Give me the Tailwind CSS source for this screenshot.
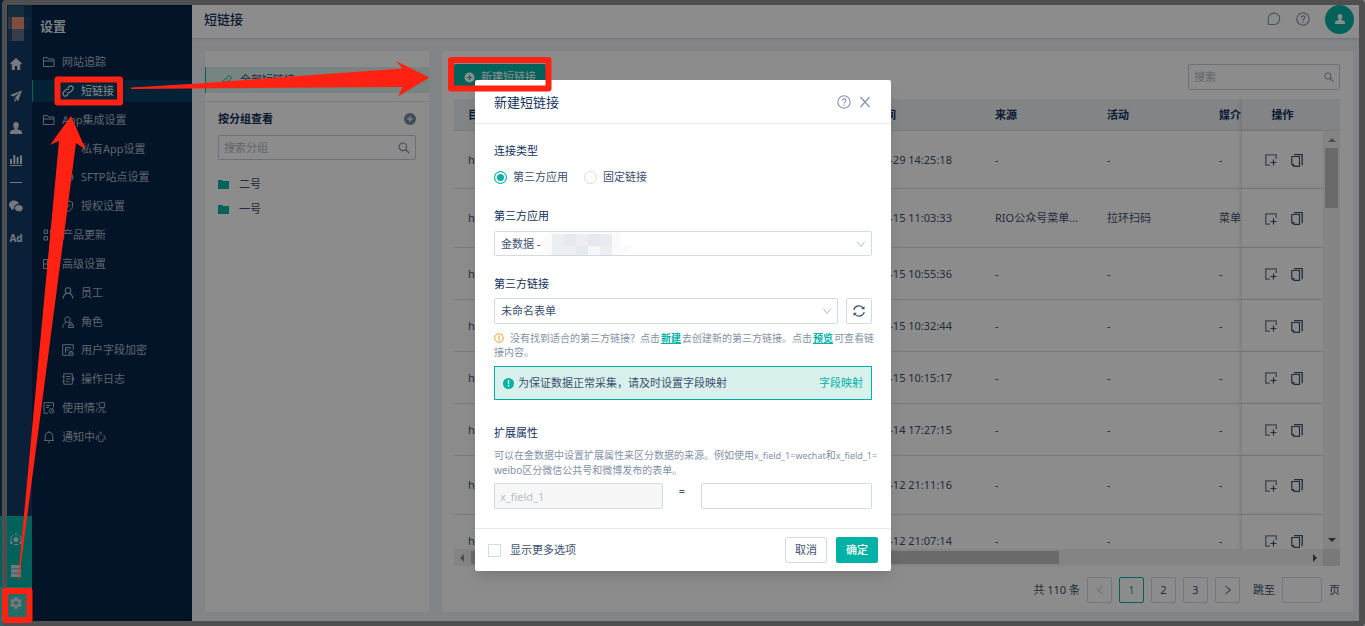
<!doctype html>
<html lang="zh-CN">
<head>
  <meta charset="UTF-8" />
  <meta name="viewport" content="width=device-width, initial-scale=1.0" />
  <title>短链接</title>
  <script src="https://cdn.jsdelivr.net/npm/@tailwindcss/browser@4"></script>
</head>
<body class="relative h-screen overflow-hidden bg-[#edf0f7] font-['Noto_Sans','Noto_Sans_CJK_SC',sans-serif] text-[11px] leading-4 text-[#3d506e]">
  <!-- icon set -->
  <svg class="hidden">
    <symbol id="i-folder" viewBox="0 0 12 12"><path d="M.5 10.5v-9h4l1 1.5h5.5v7.5zM.5 5h10.500" fill="none" stroke="currentColor"/></symbol>
    <symbol id="i-link" viewBox="0 0 12 12"><path d="M5 7.200a2.300 2.300 0 0 0 3.200 0l2.200-2.200a2.300 2.300 0 0 0-3.300-3.300L5.800 3M7 4.800a2.300 2.300 0 0 0-3.200 0L1.600 7a2.300 2.300 0 0 0 3.300 3.300L6.200 9" fill="none" stroke="currentColor" stroke-width="1.100"/></symbol>
    <symbol id="i-app" viewBox="0 0 12 12"><path d="M1.500 1.500h9v9h-9zM4 6h4" fill="none" stroke="currentColor"/></symbol>
    <symbol id="i-globe" viewBox="0 0 12 12"><path d="M6 1a5 5 0 1 1 0 10A5 5 0 0 1 6 1zM1 6h10" fill="none" stroke="currentColor"/></symbol>
    <symbol id="i-shield" viewBox="0 0 12 12"><path d="M6 .8l4.500 1.500v4C10.500 9 8 10.700 6 11.300 4 10.700 1.500 9 1.500 6.300v-4zM4 6l1.500 1.500L8.200 4.500" fill="none" stroke="currentColor"/></symbol>
    <symbol id="i-grid" viewBox="0 0 12 12"><path d="M1 1h3.500v3.500H1zM7.500 1H11v3.500H7.500zM1 7.500h3.500V11H1zM7.500 7.500H11V11H7.500z" fill="none" stroke="currentColor"/></symbol>
    <symbol id="i-set" viewBox="0 0 12 12"><path d="M.5 1.500h11v9H.5zM4.500 1.500v9M.5 6h11" fill="none" stroke="currentColor"/></symbol>
    <symbol id="i-user" viewBox="0 0 12 12"><path d="M6 .8a2.700 2.700 0 1 1 0 5.600A2.700 2.700 0 0 1 6 .8zM1 11.800c.2-3 1.500-4.500 3.500-5.600M11 11.800c-.2-3-1.500-4.500-3.500-5.600" fill="none" stroke="currentColor" stroke-width="1.100"/></symbol>
    <symbol id="i-role" viewBox="0 0 12 12"><path d="M5.500.8a2.700 2.700 0 1 1 0 5.600 2.700 2.700 0 0 1 0-5.600zM.8 11.800c.2-3 1.200-4.500 3.200-5.600M7 6.200l1 .8M6.500 9.200h5v2.300h-5zM7.700 9V8a1.300 1.300 0 0 1 2.600 0v1" fill="none" stroke="currentColor"/></symbol>
    <symbol id="i-enc" viewBox="0 0 12 12"><path d="M11.300 6V.7H.7v10.600H6M3.500 9V3.500h4.800v2M3.500 6H7M6.800 9.200h4.500v2.100H6.800zM7.800 9V7.500h2.500V9" fill="none" stroke="currentColor"/></symbol>
    <symbol id="i-log" viewBox="0 0 12 12"><path d="M1.800.8h8.500v10.400H1.800zM4 3.500h4.500M4 6h4.500M4 8.500h3M.3 3.500h2.200M.3 8.500h2.200M10.500 4.500h1v3h-1" fill="none" stroke="currentColor"/></symbol>
    <symbol id="i-usage" viewBox="0 0 12 12"><path d="M10.500 5.500V.7H1v10.600h4M3 3.500h4.500M3 5.500h3M8.500 6.500a2.300 2.300 0 1 1 0 4.700 2.300 2.300 0 0 1 0-4.700zM8.500 7.700V9h1.200" fill="none" stroke="currentColor"/></symbol>
    <symbol id="i-bell" viewBox="0 0 12 12"><path d="M1 9.500h10M2.200 9.500V5a3.800 3.800 0 0 1 7.600 0v4.500M5 11.400h2M6 0v1.500" fill="none" stroke="currentColor"/></symbol>
    <symbol id="i-search" viewBox="0 0 12 12"><circle cx="4.800" cy="4.800" r="3.800" fill="none" stroke="currentColor" stroke-width="1.200"/><path d="M7.600 7.600l3.700 3.700" stroke="currentColor" stroke-width="1.400"/></symbol>
    <symbol id="i-plus" viewBox="0 0 12 12"><circle cx="6" cy="6" r="6" fill="currentColor"/><path d="M6 3.200v5.600M3.200 6h5.600" stroke="#fff" stroke-width="1.200"/></symbol>
    <symbol id="i-plus-light" viewBox="0 0 12 12"><circle cx="6" cy="6" r="5.500" fill="#fff"/><path d="M6 3.200v5.600M3.200 6h5.600" stroke="#00b2a6" stroke-width="1.200"/></symbol>
    <symbol id="i-help" viewBox="0 0 14 14"><circle cx="7" cy="7" r="6.200" fill="none" stroke="currentColor" stroke-width="1.100"/><path d="M5.200 5.600c0-2.300 3.700-2.200 3.700 0C8.900 6.900 7 6.900 7 8.500M7 9.600v1.100" fill="none" stroke="currentColor" stroke-width="1.100"/></symbol>
    <symbol id="i-chat" viewBox="0 0 14 14"><path d="M1.300 12.500V7A5.700 5.700 0 1 1 7 12.500z" fill="none" stroke="currentColor" stroke-width="1.100"/></symbol>
    <symbol id="i-person" viewBox="0 0 12 12"><path d="M6 0c1.700 0 2.800 1.200 2.800 2.900 0 1.500-.6 2.600-1.300 3.300v1l3.200 1.300c.9.400 1.300 1 1.300 2V12H0v-1.500c0-1 .4-1.600 1.300-2l3.200-1.300v-1C3.800 5.500 3.200 4.400 3.200 2.900 3.200 1.200 4.300 0 6 0z" fill="currentColor"/></symbol>
    <symbol id="i-chevron" viewBox="0 0 10 10"><path d="M1.200 2.500L5 7.500l3.800-5" fill="none" stroke="currentColor"/></symbol>
    <symbol id="i-add" viewBox="0 0 12 12"><path d="M11.200 5V.8H.8v10.400H5" fill="none" stroke="currentColor" stroke-width="1.300" opacity=".75"/><path d="M8.500 5.500v6M5.500 8.500h6" stroke="currentColor" stroke-width="1.200"/></symbol>
    <symbol id="i-copy" viewBox="0 0 12 13"><path d="M3 .7h8.200v10.500" fill="none" stroke="currentColor" stroke-width="1.300"/><path d="M.8 2.500h7.700v9.800H3L.8 10.500z" fill="none" stroke="currentColor" stroke-width="1.200"/><path d="M1 10h2.300v2.200z" fill="currentColor"/></symbol>
  </svg>

  <div class="flex h-full">
    <!-- icon rail -->
    <nav class="flex w-8 shrink-0 flex-col items-center bg-[#123b66] text-[#d5dde6]">
      <svg class="h-[41px] w-8" viewBox="0 0 32 41"><path d="M8 6h16v11H8z" fill="#285270"/><path d="M8 17h4v12H8z" fill="#55607a"/><path d="M24 17h6v12h-6z" fill="#204469"/><path d="M12 17h12v12H12z" fill="#e88f70"/><path d="M8 29h4v12H8z" fill="#2e4668"/><path d="M12 29h12v12H12z" fill="#65708a"/></svg>
      <a href="#" aria-label="首页" class="mt-[17px]"><svg class="size-3" viewBox="0 0 12 12"><path d="M6 0L0 5.500l1 1 .8-.6V12h3V8h2.400v4h3V5.900l.8.600 1-1z" fill="currentColor"/></svg></a>
      <a href="#" aria-label="营销" class="mt-5"><svg class="size-3" viewBox="0 0 12 12"><path d="M12 .5L0 5l3.500 1.500L10 2.500 5 7.500l3 4zM4.500 8v4l1.800-1.800z" fill="currentColor"/></svg></a>
      <a href="#" aria-label="客户" class="mt-5"><svg class="size-3"><use href="#i-person"/></svg></a>
      <a href="#" aria-label="报表" class="mt-5"><svg class="size-3" viewBox="0 0 12 12"><path d="M0 5h2v5H0zM3.300 1h2v9h-2zM6.600 3h2v7h-2zM10 1.500h2V10h-2zM0 11h12v1H0z" fill="currentColor"/></svg></a>
      <hr class="mt-4 w-3 border-[#d5dde6]" />
      <a href="#" aria-label="微信" class="mt-[17px]"><svg class="h-3 w-3.5" viewBox="0 0 14 12"><path d="M5 .5c2.500 0 4.500 1.500 4.700 3.500-2.700 0-5 1.700-4.700 4.700L2 10l.3-1.700C.8 7.400 0 6.200 0 4.800 0 2.400 2.200.5 5 .5z" fill="currentColor"/><path d="M9.700 4.800c2.400 0 4.300 1.500 4.300 3.400 0 1.100-.6 2-1.500 2.600l.2 1.200-1.400-.7c-3 .7-5.800-.8-5.800-3.100 0-1.900 1.900-3.400 4.200-3.400z" fill="currentColor" stroke="#123b66" stroke-width=".5"/></svg></a>
      <a href="#" class="mt-[18px] text-[10px] font-bold">Ad</a>
      <div class="mt-auto flex h-[110px] w-full flex-col items-center bg-[#00b2a6] pt-[17px]">
        <a href="#" aria-label="自动化"><svg class="size-3" viewBox="0 0 12 12"><circle cx="6" cy="6.500" r="2.500" fill="currentColor"/><path d="M2 10A5.200 5.200 0 0 1 3.500 2M8.500 2A5.200 5.200 0 0 1 10 10M4 11.500h4" fill="none" stroke="currentColor"/><circle cx="6" cy="1" r="1" fill="currentColor"/><circle cx="1.200" cy="10" r="1.200" fill="currentColor"/><circle cx="10.800" cy="10" r="1.200" fill="currentColor"/></svg></a>
        <a href="#" aria-label="数据" class="mt-5"><svg class="size-3" viewBox="0 0 12 12"><path d="M1 0h10v3.500H1zM1 4.300h10v3.400H1zM1 8.500h10V12H1z" fill="currentColor"/></svg></a>
        <a href="#" aria-label="设置" class="mt-2.5 flex w-full grow justify-center bg-[#40c5bc] pt-2.5"><svg class="size-3" viewBox="0 0 12 12"><path fill-rule="evenodd" d="M4.700 0h2.600l.4 1.700 1.200.7 1.700-.5 1.300 2.200L10.700 5.300v1.400l1.200 1.200-1.300 2.200-1.700-.5-1.200.7L7.300 12H4.700l-.4-1.700-1.200-.7-1.700.5L.1 7.900l1.200-1.200V5.300L.1 4.100l1.300-2.200 1.700.5 1.200-.7zM6 4a2 2 0 1 0 0 4 2 2 0 0 0 0-4z" fill="currentColor"/></svg></a>
      </div>
    </nav>

    <!-- settings menu -->
    <aside class="w-40 shrink-0 bg-[#07264b] text-[#aab7c6]">
      <h2 class="pt-[18px] pl-2 text-[13px] font-bold text-[#dfe6ee]">设置</h2>
      <ul id="menu" class="mt-[17px] flex h-[397px] flex-col justify-between"></ul>
    </aside>

    <div class="flex min-w-0 grow flex-col">
      <header class="flex h-[38px] shrink-0 items-center bg-white pr-[11px] pl-3 text-[#8492a6] shadow-sm">
        <h1 class="text-[13px] font-medium text-[#12305a]">短链接</h1>
        <button type="button" aria-label="消息" class="ml-auto"><svg class="size-[14px]"><use href="#i-chat"/></svg></button>
        <button type="button" aria-label="帮助" class="ml-[15px]"><svg class="size-[14px]"><use href="#i-help"/></svg></button>
        <button type="button" aria-label="账户" class="ml-[15px] flex size-[29px] items-center justify-center rounded-full bg-[#00b2a6] text-white"><svg class="size-[10px]"><use href="#i-person"/></svg></button>
      </header>

      <main class="flex min-h-0 grow gap-[13px] pt-[13px] pr-3 pb-[14px] pl-[13px]">
        <!-- groups -->
        <section class="w-56 shrink-0 bg-white pt-4">
          <a href="#" class="flex h-[26px] items-center border-l border-[#00b2a6] bg-[#d9f1ed] pl-4"><svg class="size-2.5 text-[#00b2a6]"><use href="#i-link"/></svg><span class="ml-2">全部短链接</span></a>
          <div class="mt-2 border-t border-[#dfe3e8] px-[13px] pt-[9px]">
            <div class="flex items-center justify-between text-[#12305a]">
              <h3 class="font-bold">按分组查看</h3>
              <button type="button" aria-label="新建分组" class="text-[#7c8ba3]"><svg class="size-3"><use href="#i-plus"/></svg></button>
            </div>
            <label class="mt-2 flex h-[25px] items-center rounded-xs border border-[#c9d0da] px-[5px]">
              <input type="text" placeholder="搜索分组" class="min-w-0 grow outline-none placeholder:text-[#b4b9c2]" />
              <svg class="size-3 text-[#8492a6]"><use href="#i-search"/></svg>
            </label>
            <ul class="mt-[11px]">
              <li class="flex h-[25px] items-center gap-2.5 pt-px"><svg class="size-[11px]" viewBox="0 0 11 11"><path d="M0 1h4l1 1h6v8H0z" fill="#00b2a6"/></svg>二号</li>
              <li class="flex h-[25px] items-center gap-2.5 pt-px"><svg class="size-[11px]" viewBox="0 0 11 11"><path d="M0 1h4l1 1h6v8H0z" fill="#00b2a6"/></svg>一号</li>
            </ul>
          </div>
        </section>

        <!-- link list -->
        <section class="flex min-w-0 grow flex-col bg-white px-3 pt-[13px] pr-[13px]">
          <div class="flex h-[26px] shrink-0 justify-between">
            <button type="button" class="flex items-center gap-1.5 rounded-xs bg-[#00b2a6] px-2.5 text-white"><svg class="size-[11px]"><use href="#i-plus-light"/></svg>新建短链接</button>
            <label class="flex w-[152px] items-center rounded-xs border border-[#c9d0da] px-[5px]">
              <input type="text" placeholder="搜索" class="min-w-0 grow outline-none placeholder:text-[#b4b9c2]" />
              <svg class="size-3 text-[#8492a6]"><use href="#i-search"/></svg>
            </label>
          </div>
          <div class="mt-[9px] flex h-[450px] shrink-0 overflow-hidden">
            <div class="min-w-0 grow">
              <table class="w-full table-fixed border-separate border-spacing-0 text-left">
                <thead>
                  <tr class="h-8 bg-[#edf1f5] text-[#12305a]">
                    <th class="border-b border-[#dadee3] pl-[14px] font-bold">目标链接</th>
                    <th class="w-[145px] border-b border-[#dadee3] pl-4 font-bold">创建时间</th>
                    <th class="w-28 border-b border-[#dadee3] pl-[14px] font-bold">来源</th>
                    <th class="w-28 border-b border-[#dadee3] pl-[14px] font-bold">活动</th>
                    <th class="w-[37px] border-b border-[#dadee3] pl-[14px] font-bold whitespace-nowrap">媒介</th>
                    <th class="w-[81px] border-b border-[#dadee3] text-center font-bold shadow-[-2px_0_4px_rgba(0,0,0,0.12)]">操作</th>
                  </tr>
                </thead>
                <tbody id="rows"></tbody>
              </table>
            </div>
            <div class="flex w-[17px] shrink-0 flex-col items-center bg-[#f1f1f1]">
              <div class="h-8 w-full border-b border-[#dadee3] bg-[#edf1f5]"></div>
              <svg class="h-[17px] w-2" viewBox="0 0 8 17"><path d="M0 11l4-4 4 4z" fill="#8a8a8a"/></svg>
              <div class="h-[60px] w-[13px] bg-[#c1c1c1]"></div>
              <svg class="mt-auto h-[17px] w-2" viewBox="0 0 8 17"><path d="M0 6l4 4 4-4z" fill="#505050"/></svg>
            </div>
          </div>
          <div class="flex h-[17px] shrink-0 items-center bg-[#f1f1f1]">
            <svg class="h-2 w-[17px]" viewBox="0 0 17 8"><path d="M10 0L6 4l4 4z" fill="#8a8a8a"/></svg>
            <div class="h-[13px] w-[588px] bg-[#c1c1c1]"></div>
            <svg class="ml-auto h-2 w-[17px]" viewBox="0 0 17 8"><path d="M7 0l4 4-4 4z" fill="#505050"/></svg>
            <div class="h-full w-[17px] bg-[#dcdcdc]"></div>
          </div>
          <div class="mt-[11px] flex h-[26px] items-center justify-end gap-[7px]">
            <span>共 110 条</span>
            <button type="button" aria-label="上一页" class="flex h-full w-[25px] items-center justify-center rounded-xs border border-[#d3d8e4] text-[#b4b9c2]"><svg class="size-[10px] rotate-90"><use href="#i-chevron"/></svg></button>
            <button type="button" class="h-full w-[25px] rounded-xs border border-[#00b2a6] text-[#00b2a6]">1</button>
            <button type="button" class="h-full w-[25px] rounded-xs border border-[#d3d8e4]">2</button>
            <button type="button" class="h-full w-[25px] rounded-xs border border-[#d3d8e4]">3</button>
            <button type="button" aria-label="下一页" class="flex h-full w-[25px] items-center justify-center rounded-xs border border-[#d3d8e4]"><svg class="size-[10px] -rotate-90"><use href="#i-chevron"/></svg></button>
            <label for="jump" class="ml-1.5">跳至</label>
            <input id="jump" type="text" class="h-full w-10 rounded-xs border border-[#d3d8e4] px-1" />
            <span>页</span>
          </div>
        </section>
      </main>
    </div>
  </div>

  <div class="absolute inset-0 bg-black/45"></div>
  <div class="pointer-events-none absolute inset-y-0 right-0 left-0.5 rounded-sm border-5 border-r-6 border-[#4f4f4f]"></div>

  <!-- dialog -->
  <div class="absolute inset-0 flex items-start justify-center pt-20 pl-px">
    <form role="dialog" aria-labelledby="dlg-title" class="w-[416px] rounded-xs bg-white shadow-lg">
      <div class="flex h-11 items-center border-b border-[#e8eaec] pr-5 pl-[19px]">
        <h2 id="dlg-title" class="text-[13px] text-[#12305a]">新建短链接</h2>
        <button type="button" aria-label="帮助" class="ml-auto text-[#8294ad]"><svg class="size-[14px]"><use href="#i-help"/></svg></button>
        <button type="button" aria-label="关闭" class="ml-2 text-[#8294ad]"><svg class="size-3" viewBox="0 0 12 12"><path d="M1.500 1l9 10M10.500 1l-9 10" stroke="currentColor" stroke-width="1.200"/></svg></button>
      </div>
      <div class="px-[19px] pt-[19px] pb-[19px]">
        <fieldset>
          <legend class="text-[#12305a]">连接类型</legend>
          <div class="mt-2.5 flex">
            <label class="flex items-center gap-1.5"><input type="radio" name="kind" checked class="size-[13px] appearance-none rounded-full border border-[#c9d0da] checked:border-[#00b2a6] checked:bg-[#00b2a6] checked:shadow-[inset_0_0_0_2px_#fff]" />第三方应用</label>
            <label class="ml-4 flex items-center gap-1.5"><input type="radio" name="kind" class="size-[13px] appearance-none rounded-full border border-[#d3dae3] checked:border-[#00b2a6] checked:bg-[#00b2a6]" />固定链接</label>
          </div>
        </fieldset>
        <label for="app" class="mt-[23px] block text-[#12305a]">第三方应用</label>
        <div class="relative mt-[7px]">
          <select id="app" class="h-[25px] w-full appearance-none rounded-xs border border-[#d3dae3] px-1.5"><option>金数据 -</option></select>
          <!-- masked account name -->
          <svg class="absolute top-px left-12 h-[23px] w-[90px]" viewBox="0 0 90 23"><path d="M10 0h68v14h12q-2 9-16 9H12Q0 23 0 12 0 2 10 0z" fill="#fafafb"/><path d="M10 2h60v21H10z" fill="#eceef2"/><path d="M22 2h12v12H22zM46 2h12v12H46z" fill="#e6e8ed"/><path d="M58 2h12v12H58z" fill="#e8ebf0"/><path d="M46 14h12v9H46z" fill="#f6f6f8"/><path d="M34 14h12v9H34z" fill="#e5e8ed"/></svg>
          <svg class="pointer-events-none absolute top-2 right-1.5 size-[10px] text-[#b8bfc9]"><use href="#i-chevron"/></svg>
        </div>
        <label for="link" class="mt-5 block text-[#12305a]">第三方链接</label>
        <div class="mt-1.5 flex gap-2">
          <div class="relative grow">
            <select id="link" class="h-[26px] w-full appearance-none rounded-xs border border-[#d3dae3] px-1.5"><option>未命名表单</option></select>
            <svg class="pointer-events-none absolute top-2 right-1.5 size-[10px] text-[#b8bfc9]"><use href="#i-chevron"/></svg>
          </div>
          <button type="button" aria-label="刷新" class="flex size-[26px] items-center justify-center rounded-xs border border-[#d3dae3]"><svg class="size-3" viewBox="0 0 12 12"><path d="M.8 5A5.200 5.200 0 0 1 10.300 3.300M11.200 7A5.200 5.200 0 0 1 1.700 8.700" fill="none" stroke="currentColor" stroke-width="1.200"/><path d="M11.500 1v3.300H8.200zM.5 11V7.700h3.300z" fill="currentColor"/></svg></button>
        </div>
        <p class="mt-[7px] text-[10px] leading-[14px] whitespace-nowrap text-[#8492a6]"><svg class="mr-1.5 inline size-[10px] align-[-1px]" viewBox="0 0 10 10"><circle cx="5" cy="5" r="4.300" fill="none" stroke="#f7a52d"/><path d="M5 2.300v3.500M5 6.600v1.200" stroke="#f7a52d" stroke-width="1.200"/></svg>没有找到适合的第三方链接？点击<a href="#" class="mx-px font-bold text-[#00b2a6] underline">新建</a>去创建新的第三方链接。点击<a href="#" class="mx-px font-bold text-[#00b2a6] underline">预览</a>可查看链<br />接内容。</p>
        <div class="mt-[7px] flex h-[34px] items-center border border-[#00b2a6] bg-[#d9f1ed] px-2"><svg class="mr-1 size-[11px]" viewBox="0 0 10 10"><circle cx="5" cy="5" r="5" fill="#00b2a6"/><path d="M5 2v3.700M5 6.700V8" stroke="#fff" stroke-width="1.300"/></svg>为保证数据正常采集，请及时设置字段映射<a href="#" class="ml-auto text-[#00b2a6]">字段映射</a></div>
        <h3 class="mt-[25px] text-[#12305a]">扩展属性</h3>
        <p class="mt-[7px] text-[10px] leading-[14px] whitespace-nowrap text-[#8492a6]">可以在金数据中设置扩展属性来区分数据的来源。例如使用<code class="font-['Noto_Sans'] text-[9px]">x_field_1=wechat</code>和<code class="font-['Noto_Sans'] text-[9px]">x_field_1=</code><br />weibo区分微信公共号和微博发布的表单。</p>
        <div class="mt-1.5 flex">
          <input type="text" disabled value="x_field_1" aria-label="属性名" class="h-[26px] min-w-0 flex-1 rounded-xs border border-[#d3dae3] bg-[#f7f7f7] px-[5px] text-[#b8bfc9]" />
          <span class="w-[38px] text-center">=</span>
          <input type="text" aria-label="属性值" class="h-[26px] min-w-0 flex-1 rounded-xs border border-[#d3dae3] px-1.5" />
        </div>
      </div>
      <div class="flex h-[43px] items-center border-t border-[#e8eaec] px-[13px]">
        <label class="flex items-center gap-[9px]"><input type="checkbox" class="size-[13px] appearance-none border border-[#d3dae3]" />显示更多选项</label>
        <button type="button" class="ml-auto h-[26px] w-[42px] rounded-xs border border-[#d3dae3]">取消</button>
        <button type="submit" class="ml-[9px] h-[26px] w-[42px] rounded-xs bg-[#00b2a6] font-medium text-white">确定</button>
      </div>
    </form>
  </div>

  <!-- tutorial marks -->
  <svg class="pointer-events-none absolute top-0 left-0 h-[626px] w-[1365px]" viewBox="0 0 1365 626">
    <g fill="none" stroke="#ff2213" stroke-width="6" stroke-linejoin="round">
      <path d="M57.500 79.500h62.500v23H57.500zM451 60h97.500v28.500H451zM5 591h24.500v29H5z"/>
    </g>
    <path d="M131 87.500L190 84 402.500 68.500 396 61 429.500 77.500 398 96.500 402.500 87 190 88.500 131 89zM71 116L50 145 59 141 18 579h1L76 143 86 150z" fill="#ff2213"/>
  </svg>

  <script>
    const menu = [
      ['folder', '网站追踪', 0], ['link', '短链接', 1], ['folder', 'App集成设置', 0], ['app', '私有App设置', 1],
      ['globe', 'SFTP站点设置', 1], ['shield', '授权设置', 1], ['grid', '产品更新', 0], ['set', '高级设置', 0],
      ['user', '员工', 1], ['role', '角色', 1], ['enc', '用户字段加密', 1], ['log', '操作日志', 1],
      ['usage', '使用情况', 0], ['bell', '通知中心', 0],
    ];
    document.getElementById('menu').innerHTML = menu.map(([icon, name, sub]) => {
      const active = name === '短链接' ? 'border-[#00b2a6] bg-[#033f63] text-[#f3f6f9]' : 'border-transparent';
      return `<li><a href="#" class="flex h-[22px] items-center border-l ${sub ? 'pl-[29px]' : 'pl-2.5'} ${active}">
        <svg class="mr-[7px] size-3"><use href="#i-${icon}"/></svg>${name}</a></li>`;
    }).join('');

    const rows = [
      ['2021-07-29 14:25:18', 'h-[58px]'], ['2021-07-15 11:03:33', 'h-[59px]', 'RIO公众号菜单...', '拉环扫码', '菜单'],
      ['2021-07-15 10:55:36', 'h-[52px]'], ['2021-07-15 10:32:44', 'h-[52px]'], ['2021-07-15 10:15:17', 'h-[52px]'],
      ['2021-07-14 17:27:15', 'h-[52px]'], ['2021-07-12 21:11:16', 'h-[59px]'], ['2021-07-12 21:07:14', 'h-[52px]'],
    ];
    document.getElementById('rows').innerHTML = rows.map(([date, h, source = '-', campaign = '-', medium = '-']) => `
      <tr class="${h} whitespace-nowrap">
        <td class="border-b border-[#dadee3] pl-[14px]">https://</td>
        <td class="border-b border-[#dadee3] pl-3">${date}</td>
        <td class="border-b border-[#dadee3] pl-[14px]">${source}</td>
        <td class="border-b border-[#dadee3] pl-[14px]">${campaign}</td>
        <td class="border-b border-[#dadee3] pl-[14px]">${medium}</td>
        <td class="border-b border-[#dadee3] bg-white shadow-[-2px_0_4px_rgba(0,0,0,0.12)]">
          <div class="flex justify-center gap-[14px] pt-px pl-0.5">
            <button type="button" aria-label="添加"><svg class="size-3"><use href="#i-add"/></svg></button>
            <button type="button" aria-label="复制"><svg class="h-[13px] w-3"><use href="#i-copy"/></svg></button>
          </div>
        </td>
      </tr>`).join('');
  </script>
</body>
</html>
